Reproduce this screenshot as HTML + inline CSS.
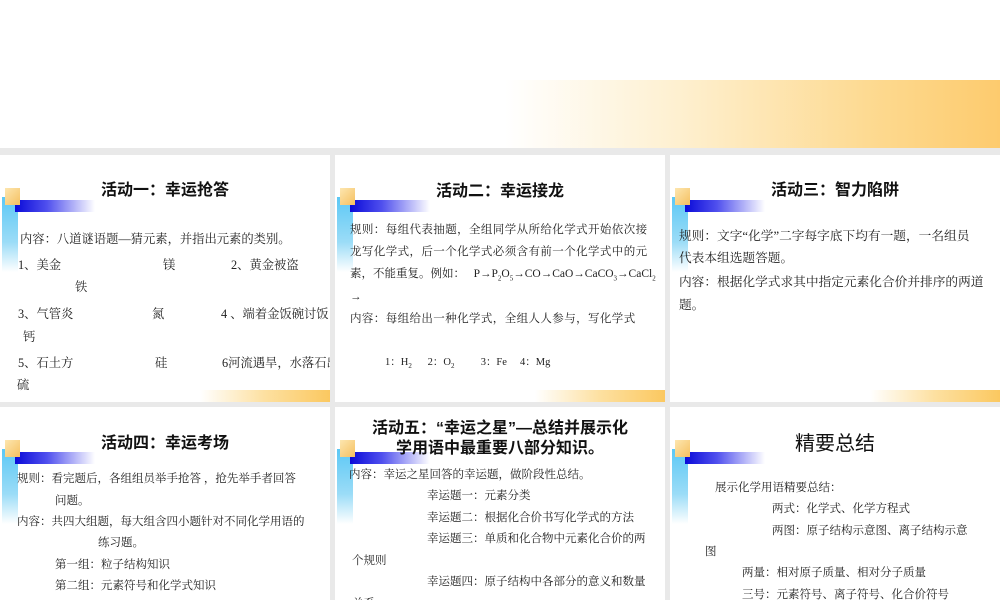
<!DOCTYPE html>
<html><head><meta charset="utf-8"><style>
body{margin:0;width:1000px;height:600px;overflow:hidden;background:#e9e9e9;position:relative;font-family:"Liberation Serif","Noto Serif CJK SC",serif;color:#222}
.top{position:absolute;left:0;top:0;width:1000px;height:148px;background:#fff}
.band{position:absolute;left:505px;top:80px;width:495px;height:68px;background:linear-gradient(90deg,#fff 0%,#fef0d0 35%,#fdd98f 75%,#fdcb6e 100%)}
.p{position:absolute;background:#fff;overflow:hidden}
.vb{position:absolute;left:2px;top:42px;width:16px;height:75px;background:linear-gradient(180deg,#5cc8f5,#9bdcf7 60%,rgba(255,255,255,0))}
.hb{position:absolute;left:15px;top:45px;width:80px;height:12px;background:linear-gradient(90deg,#0a0ad8,#5050ee 40%,rgba(255,255,255,0))}
.sq{position:absolute;left:5px;top:33px;width:15px;height:17px;background:linear-gradient(135deg,#fde6b0,#f5c060)}
.bb{position:absolute;right:0;bottom:0;width:130px;height:12px;background:linear-gradient(90deg,rgba(255,255,255,0),#fde0a0 50%,#fbc860)}
.t{position:absolute;left:0;width:330px;text-align:center;font-family:"Liberation Sans","Noto Sans CJK SC",sans-serif;font-weight:bold;font-size:16px;color:#111}
.l{position:absolute;font-size:11.5px;white-space:nowrap;line-height:16px}
.b{font-size:12.3px}
sub{font-size:7px}
</style></head><body>
<div class="top"></div><div class="band"></div>

<div class="p" style="left:0;top:155px;width:330px;height:247px">
<div class="vb"></div><div class="hb"></div><div class="sq"></div><div class="bb"></div>
<div class="t" style="top:21px">活动一：幸运抢答</div>
<div class="l b" style="left:20px;top:76px">内容：八道谜语题—猜元素，并指出元素的类别。</div>
<div class="l b" style="left:18px;top:102px">1、美金</div><div class="l b" style="left:163px;top:102px">镁</div><div class="l b" style="left:231px;top:102px">2、黄金被盗</div>
<div class="l b" style="left:75px;top:124px">铁</div>
<div class="l b" style="left:18px;top:151px">3、气管炎</div><div class="l b" style="left:152px;top:151px">氮</div><div class="l b" style="left:221px;top:151px">4 、端着金饭碗讨饭</div>
<div class="l b" style="left:23px;top:174px">钙</div>
<div class="l b" style="left:18px;top:200px">5、石土方</div><div class="l b" style="left:155px;top:200px">硅</div><div class="l b" style="left:222px;top:200px">6河流遇旱，水落石出</div>
<div class="l b" style="left:17px;top:222px">硫</div>
</div>

<div class="p" style="left:335px;top:155px;width:330px;height:247px">
<div class="vb"></div><div class="hb"></div><div class="sq"></div><div class="bb"></div>
<div class="t" style="top:22px">活动二：幸运接龙</div>
<div class="l" style="left:15px;top:67px;letter-spacing:0.4px">规则：每组代表抽题，全组同学从所给化学式开始依次接</div>
<div class="l" style="left:15px;top:89px;letter-spacing:0.4px">龙写化学式，后一个化学式必须含有前一个化学式中的元</div>
<div class="l" style="left:15px;top:111px">素，不能重复。例如：&nbsp;&nbsp; P→P<sub>2</sub>O<sub>5</sub>→CO→CaO→CaCO<sub>3</sub>→CaCl<sub>2</sub></div>
<div class="l" style="left:15px;top:134px">→</div>
<div class="l" style="left:15px;top:156px;letter-spacing:0.4px">内容：每组给出一种化学式，全组人人参与，写化学式</div>
<div class="l" style="left:50px;top:200px;font-size:10.5px">1：H<sub>2</sub>&nbsp;&nbsp;&nbsp;&nbsp;&nbsp; 2：O<sub>2</sub>&nbsp;&nbsp;&nbsp;&nbsp;&nbsp;&nbsp;&nbsp;&nbsp;&nbsp; 3：Fe&nbsp;&nbsp;&nbsp;&nbsp; 4：Mg</div>
</div>

<div class="p" style="left:670px;top:155px;width:330px;height:247px">
<div class="vb"></div><div class="hb"></div><div class="sq"></div><div class="bb"></div>
<div class="t" style="top:21px">活动三：智力陷阱</div>
<div class="l" style="left:9px;top:73px;font-size:12.7px">规则：文字“化学”二字每字底下均有一题，一名组员</div>
<div class="l" style="left:9px;top:95px;font-size:12.7px">代表本组选题答题。</div>
<div class="l" style="left:9px;top:119px;font-size:12.7px">内容：根据化学式求其中指定元素化合价并排序的两道</div>
<div class="l" style="left:9px;top:142px;font-size:12.7px">题。</div>
</div>

<div class="p" style="left:0;top:407px;width:330px;height:193px">
<div class="vb"></div><div class="hb"></div><div class="sq"></div>
<div class="t" style="top:22px">活动四：幸运考场</div>
<div class="l" style="left:17px;top:64px">规则：看完题后，各组组员举手抢答 ，抢先举手者回答</div>
<div class="l" style="left:55px;top:86px">问题。</div>
<div class="l" style="left:17px;top:107px">内容：共四大组题，每大组含四小题针对不同化学用语的</div>
<div class="l" style="left:98px;top:128px">练习题。</div>
<div class="l" style="left:55px;top:150px">第一组：粒子结构知识</div>
<div class="l" style="left:55px;top:171px">第二组：元素符号和化学式知识</div>
</div>

<div class="p" style="left:335px;top:407px;width:330px;height:193px">
<div class="vb"></div><div class="hb"></div><div class="sq"></div>
<div class="t" style="top:12px;line-height:20px">活动五：“幸运之星”—总结并展示化<br>学用语中最重要八部分知识。</div>
<div class="l" style="left:14px;top:60px">内容：幸运之星回答的幸运题，做阶段性总结。</div>
<div class="l" style="left:92px;top:81px">幸运题一：元素分类</div>
<div class="l" style="left:92px;top:103px">幸运题二：根据化合价书写化学式的方法</div>
<div class="l" style="left:92px;top:124px">幸运题三：单质和化合物中元素化合价的两</div>
<div class="l" style="left:17px;top:146px">个规则</div>
<div class="l" style="left:92px;top:167px">幸运题四：原子结构中各部分的意义和数量</div>
<div class="l" style="left:17px;top:189px">关系</div>
</div>

<div class="p" style="left:670px;top:407px;width:330px;height:193px">
<div class="vb"></div><div class="hb"></div><div class="sq"></div>
<div class="t" style="top:20px;font-weight:normal;font-size:20px">精要总结</div>
<div class="l" style="left:45px;top:73px">展示化学用语精要总结：</div>
<div class="l" style="left:102px;top:94px">两式：化学式、化学方程式</div>
<div class="l" style="left:102px;top:116px">两图：原子结构示意图、离子结构示意</div>
<div class="l" style="left:35px;top:137px">图</div>
<div class="l" style="left:72px;top:158px">两量：相对原子质量、相对分子质量</div>
<div class="l" style="left:72px;top:180px">三号：元素符号、离子符号、化合价符号</div>
</div>
</body></html>
